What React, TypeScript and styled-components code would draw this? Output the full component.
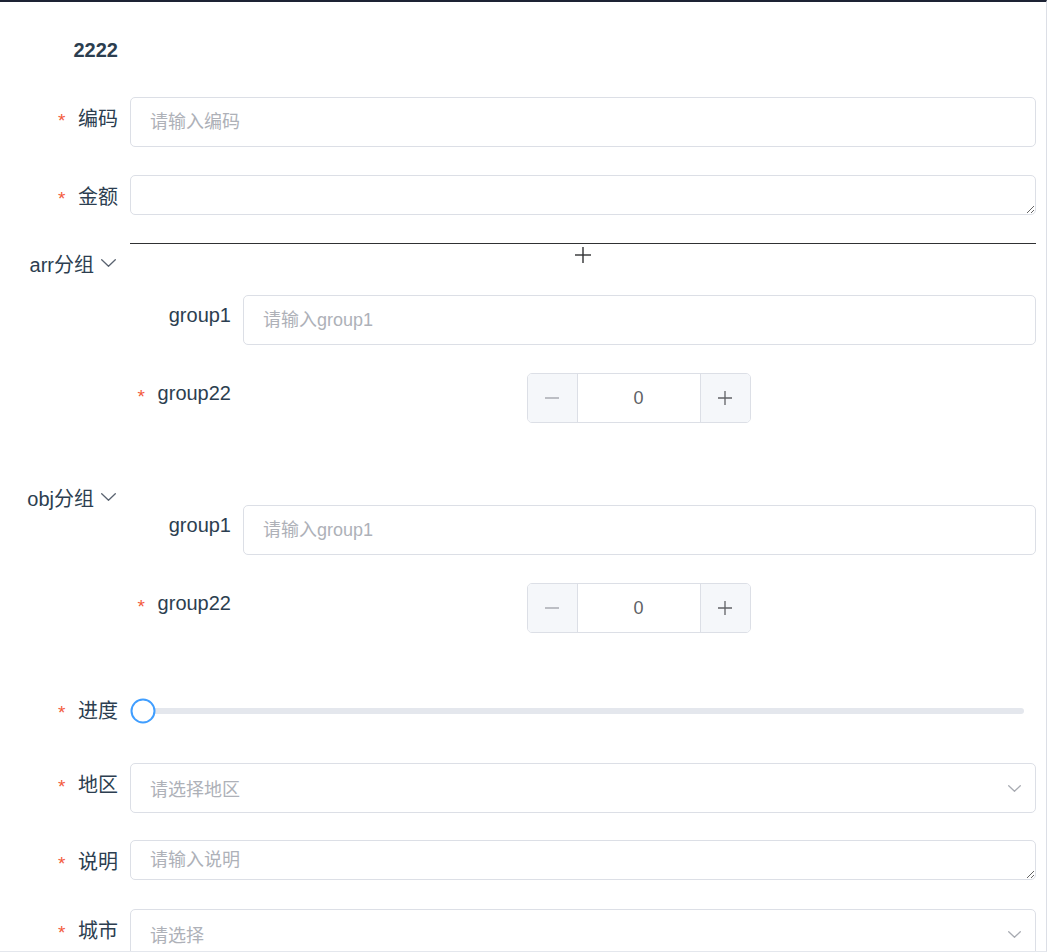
import React from "react";
import styled, { createGlobalStyle } from "styled-components";

const GlobalStyle = createGlobalStyle`
  html, body { margin: 0; padding: 0; background: #ffffff; }
  body {
    font-family: "Liberation Sans", "Noto Sans CJK SC", Arial, sans-serif;
    color: #2c3e50;
  }
  * { box-sizing: border-box; }
`;

const Page = styled.div`
  width: 1047px;
  height: 952px;
  overflow: hidden;
  border-top: 2px solid #1d2334;
  border-right: 1px solid #dcdfe6;
  border-bottom: 1px solid #e4e7ed;
  padding: 28px 10px 0 0;
`;

const FormItem = styled.div<{ $mb?: number }>`
  display: flex;
  align-items: flex-start;
  margin-bottom: ${(p) => p.$mb ?? 28}px;
`;

const Label = styled.label<{ $width?: number; $bold?: boolean }>`
  flex-shrink: 0;
  width: ${(p) => p.$width ?? 130}px;
  height: 40px;
  padding-right: 12px;
  display: flex;
  align-items: center;
  justify-content: flex-end;
  font-size: 20px;
  font-weight: ${(p) => (p.$bold ? 700 : 400)};
  color: #2c3e50;
  white-space: nowrap;
`;

const Star = styled.span`
  color: #f35a3c;
  font-size: 19px;
  width: 8px;
  margin-right: 12px;
  transform: translateY(4px);
`;

const Content = styled.div<{ $center?: boolean; $pt?: number }>`
  flex: 1;
  min-width: 0;
  display: flex;
  flex-direction: column;
  align-items: ${(p) => (p.$center ? "center" : "stretch")};
  padding-top: ${(p) => p.$pt ?? 0}px;
`;

const Input = styled.input`
  width: 100%;
  height: 50px;
  border: 1px solid #dcdfe6;
  border-radius: 5px;
  padding: 0 19px;
  font-size: 18px;
  font-family: inherit;
  color: #606266;
  outline: none;
  &::placeholder { color: #aeb1b8; }
`;

const TextArea = styled.textarea`
  display: block;
  width: 100%;
  height: 40px;
  min-height: 40px;
  border: 1px solid #dcdfe6;
  border-radius: 5px;
  padding: 5px 19px;
  font-size: 18px;
  line-height: 28px;
  font-family: inherit;
  color: #606266;
  outline: none;
  resize: vertical;
  &::placeholder { color: #aeb1b8; }
`;

const Divider = styled.div`
  height: 1px;
  background: #303133;
`;

const PlusRow = styled.div`
  height: 22px;
  margin-bottom: 29px;
  display: flex;
  align-items: center;
  justify-content: center;
  color: #303133;
`;

const GroupToggle = styled.span`
  display: inline-flex;
  align-items: center;
  gap: 7px;
  margin-right: 2px;
  color: #2c3e50;
`;

const NumberBox = styled.div`
  width: 224px;
  height: 50px;
  display: flex;
  border: 1px solid #dcdfe6;
  border-radius: 5px;
  overflow: hidden;
  transform: translateX(-1px);
`;

const StepButton = styled.div<{ $side: "left" | "right"; $disabled?: boolean }>`
  width: 50px;
  flex-shrink: 0;
  display: flex;
  align-items: center;
  justify-content: center;
  background: #f5f7fa;
  color: ${(p) => (p.$disabled ? "#a8abb2" : "#606266")};
  ${(p) =>
    p.$side === "left"
      ? "border-right: 1px solid #dcdfe6;"
      : "border-left: 1px solid #dcdfe6;"}
`;

const NumberValue = styled.div`
  flex: 1;
  display: flex;
  align-items: center;
  justify-content: center;
  font-size: 18px;
  color: #606266;
`;

const SliderWrap = styled.div`
  height: 44px;
  display: flex;
  align-items: center;
  padding: 0 12px 0 13px;
`;

const Runway = styled.div`
  position: relative;
  flex: 1;
  height: 6px;
  border-radius: 3px;
  background: #e4e7ed;
`;

const Thumb = styled.div`
  position: absolute;
  left: 0;
  top: 50%;
  width: 25px;
  height: 25px;
  border-radius: 50%;
  border: 2px solid #409eff;
  background: #ffffff;
  transform: translate(-50%, -50%);
`;

const SelectBox = styled.div`
  width: 100%;
  height: 50px;
  border: 1px solid #dcdfe6;
  border-radius: 5px;
  padding: 0 14px 0 19px;
  display: flex;
  align-items: center;
  justify-content: space-between;
  font-size: 18px;
`;

const Placeholder = styled.span`
  color: #aeb1b8;
`;

const ChevronDown = ({ w, h, color }: { w: number; h: number; color: string }) => (
  <svg width={w} height={h} viewBox={`0 0 ${w} ${h}`} fill="none">
    <polyline
      points={`0.7,0.7 ${w / 2},${h - 0.8} ${w - 0.7},0.7`}
      stroke={color}
      strokeWidth="1.3"
      strokeLinejoin="round"
      strokeLinecap="round"
    />
  </svg>
);

const PlusIcon = ({ size, color, width = 1.4 }: { size: number; color: string; width?: number }) => (
  <svg width={size} height={size} viewBox={`0 0 ${size} ${size}`}>
    <line x1={size / 2} y1="0" x2={size / 2} y2={size} stroke={color} strokeWidth={width} />
    <line x1="0" y1={size / 2} x2={size} y2={size / 2} stroke={color} strokeWidth={width} />
  </svg>
);

const MinusIcon = ({ size, color }: { size: number; color: string }) => (
  <svg width={size} height={size} viewBox={`0 0 ${size} ${size}`}>
    <line x1="0" y1={size / 2} x2={size} y2={size / 2} stroke={color} strokeWidth="1.4" />
  </svg>
);

const Req = ({ children }: { children: React.ReactNode }) => (
  <>
    <Star>*</Star>
    {children}
  </>
);

const NestedFields = ({ lastMb }: { lastMb: number }) => (
  <>
    <FormItem>
      <Label $width={113}>group1</Label>
      <Content>
        <Input placeholder="请输入group1" />
      </Content>
    </FormItem>
    <FormItem $mb={lastMb}>
      <Label $width={113}>
        <Req>group22</Req>
      </Label>
      <Content $center>
        <NumberBox>
          <StepButton $side="left" $disabled>
            <MinusIcon size={14} color="#a8abb2" />
          </StepButton>
          <NumberValue>0</NumberValue>
          <StepButton $side="right">
            <PlusIcon size={14} color="#606266" width={1.3} />
          </StepButton>
        </NumberBox>
      </Content>
    </FormItem>
  </>
);

export default function App() {
  return (
    <>
      <GlobalStyle />
      <Page>
        <FormItem $mb={27}>
          <Label $bold>2222</Label>
        </FormItem>

        <FormItem>
          <Label>
            <Req>编码</Req>
          </Label>
          <Content>
            <Input placeholder="请输入编码" />
          </Content>
        </FormItem>

        <FormItem>
          <Label>
            <Req>金额</Req>
          </Label>
          <Content>
            <TextArea />
          </Content>
        </FormItem>

        <FormItem $mb={27}>
          <Label>
            <GroupToggle>
              arr分组
              <ChevronDown w={15} h={8} color="#5a6370" />
            </GroupToggle>
          </Label>
          <Content>
            <Divider />
            <PlusRow>
              <PlusIcon size={16} color="#303133" />
            </PlusRow>
            <NestedFields lastMb={27} />
          </Content>
        </FormItem>

        <FormItem $mb={29}>
          <Label>
            <GroupToggle>
              obj分组
              <ChevronDown w={15} h={8} color="#5a6370" />
            </GroupToggle>
          </Label>
          <Content $pt={28}>
            <NestedFields lastMb={27} />
          </Content>
        </FormItem>

        <FormItem $mb={30}>
          <Label>
            <Req>进度</Req>
          </Label>
          <Content>
            <SliderWrap>
              <Runway>
                <Thumb />
              </Runway>
            </SliderWrap>
          </Content>
        </FormItem>

        <FormItem $mb={27}>
          <Label>
            <Req>地区</Req>
          </Label>
          <Content>
            <SelectBox>
              <Placeholder>请选择地区</Placeholder>
              <ChevronDown w={13} h={7} color="#a8abb2" />
            </SelectBox>
          </Content>
        </FormItem>

        <FormItem $mb={29}>
          <Label>
            <Req>说明</Req>
          </Label>
          <Content>
            <TextArea placeholder="请输入说明" />
          </Content>
        </FormItem>

        <FormItem>
          <Label>
            <Req>城市</Req>
          </Label>
          <Content>
            <SelectBox>
              <Placeholder>请选择</Placeholder>
              <ChevronDown w={13} h={7} color="#a8abb2" />
            </SelectBox>
          </Content>
        </FormItem>
      </Page>
    </>
  );
}
